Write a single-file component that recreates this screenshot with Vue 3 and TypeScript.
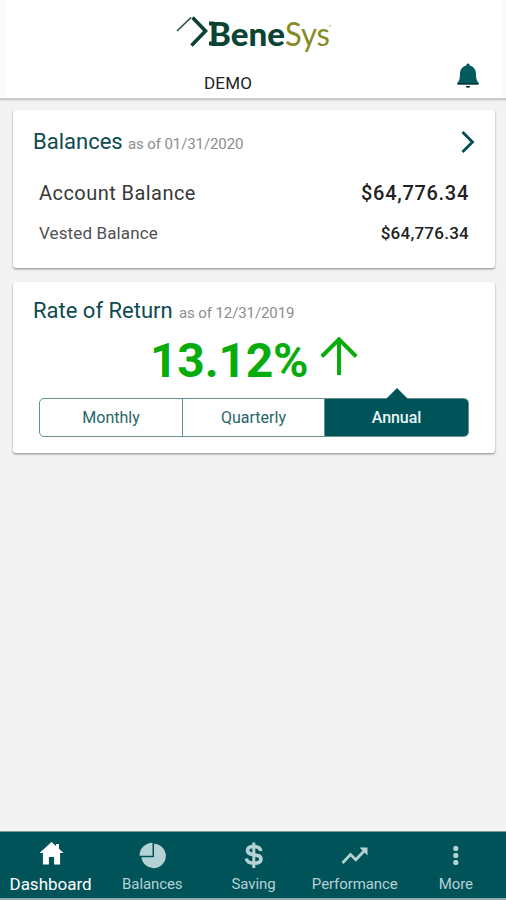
<script setup lang="ts">
import { ref } from 'vue'

type Period = 'Monthly' | 'Quarterly' | 'Annual'
const periods: Period[] = ['Monthly', 'Quarterly', 'Annual']
const period = ref<Period>('Annual')

const tabs = [
  { label: 'Dashboard', icon: 'home' },
  { label: 'Balances', icon: 'pie' },
  { label: 'Saving', icon: 'dollar' },
  { label: 'Performance', icon: 'trend' },
  { label: 'More', icon: 'more' },
]
const activeTab = ref('Dashboard')
</script>

<template>
  <div class="screen">
    <header class="header">
      <div class="header-inner">
        <svg class="logo" width="172" height="57" viewBox="0 -8 172 57">
          <path d="M4 17L18 3.500" fill="none" stroke="#31554a" stroke-width="1.700" />
          <path d="M19.500 3.500L32.500 17L18.500 31.500" fill="none" stroke="#0b4334" stroke-width="3.600" />
          <path d="M36 7.500h5v4h-5zM36 27.500h5v4h-5z" fill="#0b4334" />
          <text class="logo-bene" x="36" y="31.500" textLength="76" lengthAdjust="spacingAndGlyphs">Bene</text>
          <text class="logo-sys" x="112" y="31.500" textLength="45" lengthAdjust="spacingAndGlyphs">Sys</text>
          <circle cx="157" cy="12" r="1" fill="#c4c79a" />
        </svg>
        <span class="demo">DEMO</span>
        <svg class="bell" width="24" height="26" viewBox="0 0 24 26">
          <path d="M12 0.500c1.200 0 1.700.8 1.700 2.100 4 .9 6.200 4 6.300 8.400.1 4.500.7 7 2.500 8.800v1.700h-21v-1.700C3.300 18 3.900 15.500 4 11c.1-4.400 2.300-7.500 6.300-8.400 0-1.300.5-2.100 1.700-2.100z" fill="#035a5e" />
          <path d="M1.500 20h21v1.500h-21z" fill="#02383d" />
          <path d="M9.700 23h4.600c-.4 1.300-1.200 1.800-2.300 1.800s-1.900-.5-2.300-1.800z" fill="#02383d" />
        </svg>
      </div>
    </header>

    <main class="content">
      <section class="card balances">
        <div class="card-head">
          <h2 class="title title-balances">Balances</h2>
          <span class="asof">as of 01/31/2020</span>
          <svg class="chevron" width="14" height="24" viewBox="0 0 14 24">
            <path d="M1.500 2L11.500 12L1.500 22" fill="none" stroke="#034c54" stroke-width="2.800" />
          </svg>
        </div>
        <div class="row row-account">
          <span>Account Balance</span><b>$64,776.34</b>
        </div>
        <div class="row row-vested">
          <span>Vested Balance</span><b>$64,776.34</b>
        </div>
      </section>

      <section class="card returns">
        <div class="card-head">
          <h2 class="title title-rate">Rate of Return</h2>
          <span class="asof">as of 12/31/2019</span>
        </div>
        <div class="rate">
          <span>13.12%</span>
          <svg width="38" height="40" viewBox="0 0 38 40">
            <path d="M19 39V4M1.800 20.500L19 3.300L36.200 20.500" fill="none" stroke="#08ac0d" stroke-width="4" />
          </svg>
        </div>
        <div class="segments">
          <button
            v-for="p in periods"
            :key="p"
            type="button"
            class="segment"
            :class="{ selected: p === period }"
            @click="period = p"
          >{{ p }}</button>
        </div>
      </section>
    </main>

    <nav class="nav">
      <button
        v-for="t in tabs"
        :key="t.label"
        type="button"
        class="tab"
        :class="{ active: t.label === activeTab }"
        @click="activeTab = t.label"
      >
        <svg width="30" height="30" viewBox="0 0 30 30">
          <path v-if="t.icon === 'home'" d="M15.500 3l4.500 4V5h3v4.800L27.500 14h-3.400v11.500h-6v-7.500h-5.200v7.500h-6V14H3.500z" fill="currentColor" />
          <template v-else-if="t.icon === 'pie'">
            <path d="M15.500 3.800v13H2.500A13 13 0 0 1 15.500 3.800z" fill="currentColor" />
            <path d="M17 4.800A12.200 12.200 0 1 1 4.500 18.200H17z" fill="currentColor" />
          </template>
          <g v-else-if="t.icon === 'dollar'" fill="none" stroke="currentColor">
            <path d="M22.800 12C22.300 9 19.800 7.500 15.800 7.500c-4.200 0-6.300 1.500-6.300 4 0 6 13.500 2.500 13.500 8.500 0 2.500-2.500 4.200-7 4.200-4.700 0-7.200-1.800-7.700-4.700" stroke-width="3.600" />
            <path d="M15.800 3.500V29" stroke-width="3" />
          </g>
          <g v-else-if="t.icon === 'trend'" fill="none" stroke="currentColor">
            <path d="M3.500 24l8-8.500l5.300 5.300L26.500 10.500" stroke-width="2.800" />
            <path d="M20.500 8.500h8v8z" fill="currentColor" stroke="none" />
          </g>
          <g v-else fill="currentColor">
            <rect x="13.300" y="7" width="5" height="5" rx="1.700" />
            <rect x="13.300" y="14" width="5" height="5" rx="1.700" />
            <rect x="13.300" y="21" width="5" height="5" rx="1.700" />
          </g>
        </svg>
        <span>{{ t.label }}</span>
      </button>
    </nav>
  </div>
</template>

<style>
body {
  background: #f3f3f3;
}
</style>

<style scoped>
.screen {
  display: flex;
  flex-direction: column;
  height: 900px;
  background: #f3f3f3;
  font-family: Roboto, sans-serif;
  overflow: hidden;
}
.screen * {
  box-sizing: border-box;
}
button {
  font: inherit;
  padding: 0;
  margin: 0;
  border: 0;
  background: none;
}
.header {
  height: 100px;
  padding: 0 4px 2px 6px;
  background: #fafafa;
  border-bottom: 2px solid #cbcbcb;
  box-shadow: 0 1px 1px #e0e0e0;
}
.header-inner {
  height: 98px;
  padding-top: 6px;
  background: #fff;
  display: grid;
  grid-template-columns: 199px 251px 24px 1fr;
  grid-template-rows: 57px 28px;
}
.logo {
  grid-column: 1 / -1;
  margin-left: 167px;
}
.logo-bene {
  font: 900 33px Lato, sans-serif;
  fill: #0b4334;
}
.logo-sys {
  font: 400 33px Lato, sans-serif;
  fill: #878b25;
}
.demo {
  grid-column: 1 / 3;
  padding-left: 198px;
  font-size: 17px;
  line-height: 40px;
  color: #222;
  letter-spacing: 0.2px;
}
.bell {
  grid-column: 3;
}
.content {
  flex: 1;
  padding: 10px 11px 0 13px;
}
.card {
  background: #fff;
  border-radius: 3px;
  box-shadow: 0 1px 2px rgba(0, 0, 0, 0.36), 0 2px 3px rgba(0, 0, 0, 0.08);
}
.balances {
  height: 158px;
  padding: 16px 20px 0;
}
.returns {
  height: 171px;
  margin-top: 14px;
  padding: 13px 20px 0;
}
.card-head {
  display: flex;
  align-items: baseline;
  height: 32px;
}
.title {
  margin: 0;
  font-size: 22px;
  font-weight: 400;
  line-height: 32px;
  color: #0d4b50;
  white-space: nowrap;
}
.title-balances {
  width: 95px;
}
.title-rate {
  width: 146px;
}
.asof {
  font-size: 15px;
  color: #8d8d8d;
  letter-spacing: -0.1px;
}
.chevron {
  margin-left: auto;
  align-self: center;
}
.row {
  display: flex;
  justify-content: space-between;
  padding: 0 6px;
}
.row b {
  font-weight: 500;
  color: #222;
}
.row-account {
  margin-top: 15px;
  font-size: 20px;
  line-height: 40px;
  color: #383838;
  letter-spacing: 0.45px;
}
.row-account b {
  letter-spacing: 0.7px;
}
.row-vested {
  font-size: 17px;
  line-height: 41px;
  color: #505050;
  letter-spacing: 0.12px;
}
.row-vested b {
  letter-spacing: 0.25px;
}
.rate {
  display: flex;
  height: 71px;
  padding: 9px 0 0 117px;
  gap: 12px;
  color: #08ac0d;
}
.rate span {
  font-size: 48px;
  font-weight: 700;
  line-height: 49px;
  letter-spacing: -0.2px;
}
.segments {
  display: grid;
  grid-template-columns: 142px 142px 144px;
  width: 430px;
  height: 39px;
  margin-left: 6px;
  border: 1px solid #65908f;
  border-radius: 5px;
}
.segment {
  position: relative;
  font-size: 16px;
  color: #276568;
}
.segment + .segment {
  border-left: 1px solid #65908f;
}
.segment.selected {
  background: #005358;
  color: #e7f5f5;
  font-weight: 500;
  letter-spacing: -0.1px;
  border-radius: 0 4px 4px 0;
}
.segment.selected::before {
  content: '';
  position: absolute;
  left: 61px;
  top: -11px;
  border: solid transparent;
  border-width: 0 11px 11px;
  border-bottom-color: #005358;
}
.nav {
  display: grid;
  grid-template-columns: repeat(5, 1fr);
  height: 69px;
  background: #005358;
  border-top: 1px solid #7d9c9c;
  border-bottom: 2px solid #8cacae;
}
.tab {
  display: flex;
  flex-direction: column;
  align-items: center;
  padding-top: 7px;
  color: #b5d2d5;
  font-size: 15px;
}
.tab span {
  line-height: 26px;
  margin-top: 2px;
  padding-left: 1px;
  white-space: nowrap;
  letter-spacing: -0.1px;
}
.tab.active {
  color: #fff;
  font-size: 17px;
}
.tab.active span {
  padding-left: 0;
  letter-spacing: 0;
}
</style>
